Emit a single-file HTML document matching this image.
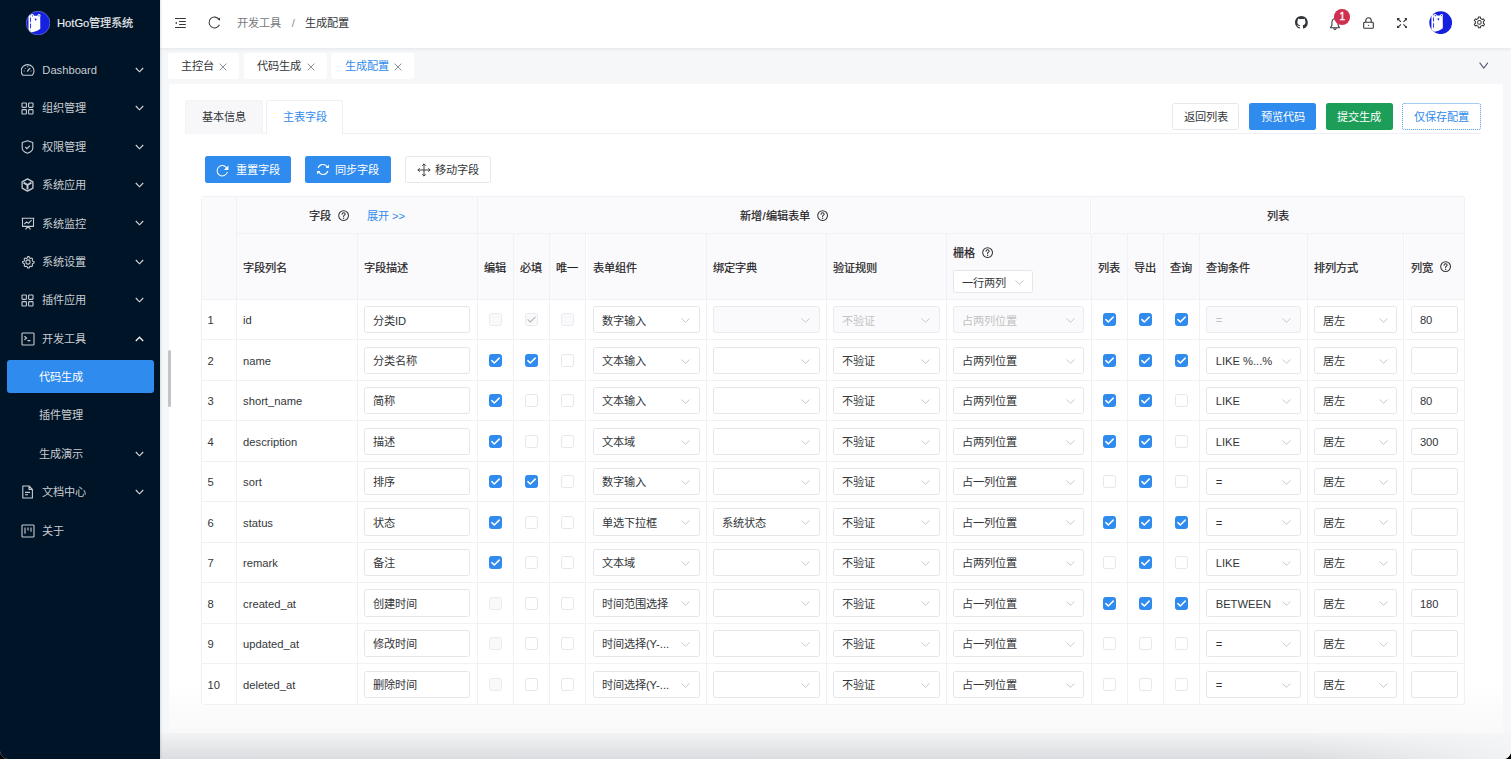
<!DOCTYPE html>
<html lang="zh-CN">
<head>
<meta charset="utf-8">
<title>HotGo</title>
<style>
*{box-sizing:border-box;margin:0;padding:0}
html,body{width:1511px;height:759px;overflow:hidden;background:#000;font-family:"Liberation Sans",sans-serif;font-size:11.2px;color:#333639;-webkit-font-smoothing:antialiased}
.abs{position:absolute}
#win{position:absolute;left:0;top:0;width:1511px;height:759px;background:#f5f7f9;border-radius:0 0 8px 8px;overflow:hidden}
#side{position:absolute;left:0;top:0;width:160px;height:759px;background:#001428;overflow:hidden;box-shadow:1px 0 2px rgba(0,21,41,.12);z-index:2}
#logo{position:absolute;left:26.2px;top:10.5px;width:24.2px;height:24.2px;line-height:0}
#logotxt{position:absolute;left:57px;top:15px;color:#eceef0;font-size:11.2px;line-height:16px;white-space:nowrap;-webkit-text-stroke:0.15px #eceef0}
.mi{position:absolute;left:0;width:160px;height:38.4px}
.mic{position:absolute;left:20.5px;top:13.1px;width:14px;height:14px;display:flex;align-items:center;justify-content:center}
.mt{position:absolute;left:42.3px;top:12px;line-height:16px;color:#c9ccd0;white-space:nowrap}
.mt2{position:absolute;left:39px;top:12px;line-height:16px;color:#c9ccd0;white-space:nowrap}
.mch{position:absolute;left:135.4px;top:16.9px;width:9px;height:6px;line-height:0}
.active{position:absolute;left:7px;width:146.8px;height:33.1px;background:#2f8bed;border-radius:3px}
.active .mt2{left:32px;top:8.9px;color:#fff}
#hdr{position:absolute;left:160px;top:0;width:1351px;height:48px;background:#fff;box-shadow:0 1px 4px rgba(0,21,41,.08);z-index:1}
#tabsbar{position:absolute;left:160px;top:48px;width:1351px;height:36px;background:#f5f7f9}
.ptab{position:absolute;top:53.2px;height:25.6px;background:#fff;border-radius:3px;line-height:27px;padding-left:13.4px;white-space:nowrap;color:#333639}
.ptab .x{position:absolute;top:9.4px;width:8px;height:8px}
#card{position:absolute;left:169px;top:84.4px;width:1334px;height:648.6px;background:linear-gradient(to bottom,#fff 92%,#f9f9fa 100%);border-radius:2px}
.btn{position:absolute;height:27px;border-radius:2.5px;line-height:29px;text-align:center;white-space:nowrap}
.btn.pri{background:#2f8bed;color:#fff}
.btn.suc{background:#1c9e58;color:#fff}
.btn.def{background:#fff;border:1px solid #e8e8ec;color:#333639;line-height:27px}
.btn.dash{background:#fff;border:1px dotted #4f9cf0;color:#2f8bed;line-height:27px}
#tbl{position:absolute;left:201px;top:196.2px;width:1263.5px;height:508.6px;border:1px solid #f0f0f5;border-radius:3px;overflow:hidden}
.c{position:absolute;border-right:1px solid #f1f1f5;border-bottom:1px solid #f1f1f5;display:flex;align-items:center;padding-left:6.1px;white-space:nowrap}
.c.h{background:#fafafc}
.c.b{background:#fff}
.c.nb{border-right:none}
.c.last{border-bottom:none}
.c.ctr{justify-content:center;padding-left:0}
.ht{color:#1f2225;-webkit-text-stroke:0.2px #1f2225}
.q{margin-left:7.1px;flex:none;position:relative;top:0.4px}
.link{color:#2f8bed;margin-left:18px}
.bt{color:#333639}
.cb{display:inline-block;width:13px;height:13px;border:1px solid #e6e6eb;border-radius:2.5px;background:#fff;line-height:0;position:relative}
.cb svg{position:absolute;left:-1px;top:-1px}
.cb.on{background:#2f8bed;border-color:#2f8bed}
.cb.dis{background:#f9f9fb;border-color:#ebebef}
.sel,.inp{position:relative;height:27.2px;border:1px solid #e6e6ea;border-radius:2.5px;background:#fff;display:flex;align-items:center;padding-left:8.3px;overflow:hidden}
.st{position:relative;top:-0.2px}
.st.lt{top:0.6px}
.lt2{position:relative;top:0.5px}
.sel.dis{background:#fafafc;border-color:#ebebef}
.sel.dis .st{color:#c2c2c2}
.sel .chev{position:absolute;right:8.7px;top:11px}
.gridh{display:flex;flex-direction:column;padding-left:0;margin-top:4.6px}
.gridh>div:first-child{display:flex;align-items:center;height:14px;margin-bottom:11.6px}
.gsel{width:80.2px;height:22.3px;flex:none}
.gsel .st{top:0.5px}
.gsel .chev{top:8.6px;right:8.5px}
#botshade{position:absolute;left:160px;top:733px;width:1351px;height:26px;background:linear-gradient(to bottom,#f2f3f5,#dcdde0)}
#botfade{position:absolute;left:1300px;top:733px;width:211px;height:26px;background:linear-gradient(to right,rgba(245,246,248,0),rgba(245,246,248,.85))}
.corner{position:absolute;width:12px;height:12px;background:#000}
</style>
</head>
<body><div id="win">
<div id="side">
  <div id="logo"><svg width="24.2" height="24.2" viewBox="0 0 24 24"><defs><clipPath id="cc1"><circle cx="12" cy="12" r="11.7"/></clipPath></defs><circle cx="12" cy="12" r="11.7" fill="#1620e0"/><g clip-path="url(#cc1)"><rect x="2.5" y="3.2" width="1.7" height="19" fill="#fff"/><path d="M4.2 5.8 C3.9 3.9 5.4 2.9 6.6 3.1 C7.5 3.3 7.9 4.1 8 4.6 L11.3 4.6 C11.5 4 12 3.1 13 3.1 C14.3 3.2 14.9 4.6 14.1 5.9 L14.2 17.6 C12 19.6 8 20.9 4.2 21.4 Z" fill="#fff"/><rect x="4.1" y="6.6" width="0.9" height="4" fill="#1620e0"/><rect x="4.1" y="12.6" width="0.9" height="4.4" fill="#1620e0"/><circle cx="6.5" cy="4.8" r=".65" fill="#1620e0"/><circle cx="12.9" cy="4.8" r=".65" fill="#1620e0"/><ellipse cx="9.6" cy="8.5" rx=".85" ry="1.05" fill="#1620e0"/><circle cx="8.1" cy="7.2" r=".4" fill="#8b90e8"/><circle cx="11.1" cy="7.2" r=".4" fill="#8b90e8"/></g><circle cx="12" cy="12" r="11.75" fill="none" stroke="#9aa0f0" stroke-width=".5"/></svg></div>
  <div id="logotxt">HotGo管理系统</div>
  <div class="mi" style="top:49.8px"><span class="mic"><svg width="14" height="14" viewBox="0 0 14 14"><path d="M1.77 12.2 A6.4 6.4 0 1 1 11.43 12.2 Z" stroke="#c9ccd1" fill="none" stroke-width="1.1" stroke-linejoin="round"/><path d="M6.5 8.1 L8.3 5.8" stroke="#c9ccd1" stroke-width="1.3" stroke-linecap="round"/><path d="M6.6 3.3 v.9 M2.7 8 h.9 M10.5 8 h-.9 M3.9 5.1 l.6 .6 M9.3 5.1 l-.6 .6" stroke="#c9ccd1" fill="none" stroke-width="1.1"/></svg></span><span class="mt">Dashboard</span><span class="mch"><svg width="9" height="6" viewBox="0 0 9 6"><path d="M0.8 1 L4.5 4.8 L8.2 1" fill="none" stroke="#d9dadd" stroke-width="1.1"/></svg></span></div><div class="mi" style="top:88.3px"><span class="mic"><svg width="13" height="13" viewBox="0 0 13 13"><rect x="1" y="1" width="4.4" height="4.4" rx=".6" stroke="#c9ccd1" fill="none" stroke-width="1.1"/><rect x="7.6" y="1" width="4.4" height="4.4" rx=".6" stroke="#c9ccd1" fill="none" stroke-width="1.1"/><rect x="1" y="7.6" width="4.4" height="4.4" rx=".6" stroke="#c9ccd1" fill="none" stroke-width="1.1"/><rect x="7.6" y="7.6" width="4.4" height="4.4" rx=".6" stroke="#c9ccd1" fill="none" stroke-width="1.1"/></svg></span><span class="mt">组织管理</span><span class="mch"><svg width="9" height="6" viewBox="0 0 9 6"><path d="M0.8 1 L4.5 4.8 L8.2 1" fill="none" stroke="#d9dadd" stroke-width="1.1"/></svg></span></div><div class="mi" style="top:126.8px"><span class="mic"><svg width="13" height="14" viewBox="0 0 13 14"><path d="M6.5 0.8 L11.8 2.6 V8 C11.8 10.4 9.4 12.2 6.5 13.2 C3.6 12.2 1.2 10.4 1.2 8 V2.6 Z" stroke="#c9ccd1" fill="none" stroke-width="1.1" stroke-linejoin="round"/><path d="M4.3 7 L6 8.7 L8.9 5.6" stroke="#c9ccd1" fill="none" stroke-width="1.1"/></svg></span><span class="mt">权限管理</span><span class="mch"><svg width="9" height="6" viewBox="0 0 9 6"><path d="M0.8 1 L4.5 4.8 L8.2 1" fill="none" stroke="#d9dadd" stroke-width="1.1"/></svg></span></div><div class="mi" style="top:165.20000000000002px"><span class="mic"><svg width="13" height="14" viewBox="0 0 13 14"><path d="M6.5 0.9 L11.9 3.9 V10.1 L6.5 13.1 L1.1 10.1 V3.9 Z" stroke="#c9ccd1" fill="none" stroke-width="1.3" stroke-linejoin="round"/><path d="M2.6 4.6 L6.5 7 L10.4 4.6 M6.5 7 V11.6" stroke="#c9ccd1" fill="none" stroke-width="1.9"/></svg></span><span class="mt">系统应用</span><span class="mch"><svg width="9" height="6" viewBox="0 0 9 6"><path d="M0.8 1 L4.5 4.8 L8.2 1" fill="none" stroke="#d9dadd" stroke-width="1.1"/></svg></span></div><div class="mi" style="top:203.60000000000002px"><span class="mic"><svg width="14" height="13" viewBox="0 0 14 13"><path d="M0.8 1.2 H13.2 M1.5 1.2 V9.4 H12.5 V1.2 M4.5 12.4 L7 9.4 L9.5 12.4 M3.3 7.2 L5.6 4.8 L7.4 6.3 L10.6 3.2" stroke="#c9ccd1" fill="none" stroke-width="1.1" stroke-linejoin="round"/></svg></span><span class="mt">系统监控</span><span class="mch"><svg width="9" height="6" viewBox="0 0 9 6"><path d="M0.8 1 L4.5 4.8 L8.2 1" fill="none" stroke="#d9dadd" stroke-width="1.1"/></svg></span></div><div class="mi" style="top:242.0px"><span class="mic"><svg width="14" height="14" viewBox="0 0 24 24"><path d="M12 2.5 l2 .3 .6 2.3 1.6 .9 2.3-.7 1.4 1.5 -.7 2.3 .9 1.6 2.3 .6 v2.6 l-2.3 .6 -.9 1.6 .7 2.3 -1.4 1.5 -2.3-.7 -1.6 .9 -.6 2.3 h-2.6 l-.6-2.3 -1.6-.9 -2.3 .7 -1.5-1.5 .7-2.3 -.9-1.6 -2.3-.6 v-2.6 l2.3-.6 .9-1.6 -.7-2.3 1.5-1.5 2.3 .7 1.6-.9 .6-2.3 z" fill="none" stroke="#c9ccd1" stroke-width="1.8" stroke-linejoin="round"/><circle cx="12" cy="12" r="3.6" fill="none" stroke="#c9ccd1" stroke-width="1.8"/></svg></span><span class="mt">系统设置</span><span class="mch"><svg width="9" height="6" viewBox="0 0 9 6"><path d="M0.8 1 L4.5 4.8 L8.2 1" fill="none" stroke="#d9dadd" stroke-width="1.1"/></svg></span></div><div class="mi" style="top:280.40000000000003px"><span class="mic"><svg width="13" height="13" viewBox="0 0 13 13"><rect x="1" y="1" width="4.4" height="4.4" rx=".6" stroke="#c9ccd1" fill="none" stroke-width="1.1"/><rect x="7.6" y="1" width="4.4" height="4.4" rx=".6" stroke="#c9ccd1" fill="none" stroke-width="1.1"/><rect x="1" y="7.6" width="4.4" height="4.4" rx=".6" stroke="#c9ccd1" fill="none" stroke-width="1.1"/><rect x="7.6" y="7.6" width="4.4" height="4.4" rx=".6" stroke="#c9ccd1" fill="none" stroke-width="1.1"/></svg></span><span class="mt">插件应用</span><span class="mch"><svg width="9" height="6" viewBox="0 0 9 6"><path d="M0.8 1 L4.5 4.8 L8.2 1" fill="none" stroke="#d9dadd" stroke-width="1.1"/></svg></span></div><div class="mi" style="top:318.8px"><span class="mic"><svg width="14" height="14" viewBox="0 0 14 14"><rect x="1" y="1" width="12" height="12" rx="0.8" stroke="#c9ccd1" fill="none" stroke-width="1.1"/><path d="M3.4 4.2 L5.6 6 L3.4 7.8 M6.4 8.6 H9.4" stroke="#c9ccd1" fill="none" stroke-width="1.1"/></svg></span><span class="mt">开发工具</span><span class="mch"><svg width="9" height="6" viewBox="0 0 9 6"><path d="M0.8 5 L4.5 1.2 L8.2 5" fill="none" stroke="#eef0f2" stroke-width="1.3"/></svg></span></div><div class="active" style="top:360.2px"><span class="mt2">代码生成</span></div><div class="mi" style="top:395.3px"><span class="mt2 sub">插件管理</span></div><div class="mi" style="top:433.7px"><span class="mt2 sub">生成演示</span><span class="mch"><svg width="9" height="6" viewBox="0 0 9 6"><path d="M0.8 1 L4.5 4.8 L8.2 1" fill="none" stroke="#d9dadd" stroke-width="1.1"/></svg></span></div><div class="mi" style="top:472.1px"><span class="mic"><svg width="13" height="14" viewBox="0 0 13 14"><path d="M1.8 1 H8 L11.4 4.4 V13 H1.8 Z M8 1 V4.4 H11.4 M4 7.4 H9 M4 9.8 H7" stroke="#c9ccd1" fill="none" stroke-width="1.1" stroke-linejoin="round"/></svg></span><span class="mt">文档中心</span><span class="mch"><svg width="9" height="6" viewBox="0 0 9 6"><path d="M0.8 1 L4.5 4.8 L8.2 1" fill="none" stroke="#d9dadd" stroke-width="1.1"/></svg></span></div><div class="mi" style="top:510.50000000000006px"><span class="mic"><svg width="14" height="14" viewBox="0 0 14 14"><rect x="1" y="1" width="12" height="12" rx="0.8" stroke="#c9ccd1" fill="none" stroke-width="1.1"/><path d="M4 3.6 V9.8 M7 3.6 V6.6 M10 3.6 V7.8" stroke="#c9ccd1" fill="none" stroke-width="1.1"/></svg></span><span class="mt">关于</span></div>
</div>
<div id="hdr">
  <svg class="abs" style="left:15px;top:18px" width="11" height="10" viewBox="0 0 11 10"><path d="M0 0.5 H10.8 M4.1 3.5 H10.8 M4.1 6.4 H10.8 M0 9.4 H10.8" stroke="#333639" stroke-width="1.05"/><path d="M0 4.95 L1.9 3.7 V6.2 Z" fill="#333639"/></svg>
  <svg class="abs" style="left:47.6px;top:16.4px" width="13" height="13" viewBox="0 0 13 13"><path d="M11.39 8.78 A5.4 5.4 0 1 1 10.92 3.40" fill="none" stroke="#333639" stroke-width="1.05"/><path d="M9.5 3.1 L12.1 1.8 L12 4.7 Z" fill="#333639"/></svg>
  <span class="abs" style="left:77.3px;top:15px;line-height:16px;color:#76797d">开发工具</span>
  <span class="abs" style="left:131.8px;top:15px;line-height:16px;color:#8a8d91">/</span>
  <span class="abs" style="left:144.8px;top:15px;line-height:16px;color:#333639">生成配置</span>
  <!-- right icons -->
  <svg class="abs" style="left:1135.2px;top:16.4px" width="12.8" height="12.8" viewBox="0 0 16 16"><path fill="#333639" d="M8 0C3.58 0 0 3.58 0 8c0 3.54 2.29 6.53 5.47 7.59.4.07.55-.17.55-.38 0-.19-.01-.82-.01-1.49-2.01.37-2.53-.49-2.69-.94-.09-.23-.48-.94-.82-1.13-.28-.15-.68-.52-.01-.53.63-.01 1.08.58 1.23.82.72 1.21 1.87.87 2.33.66.07-.52.28-.87.51-1.07-1.78-.2-3.64-.89-3.64-3.95 0-.87.31-1.59.82-2.15-.08-.2-.36-1.02.08-2.12 0 0 .67-.21 2.2.82.64-.18 1.32-.27 2-.27.68 0 1.36.09 2 .27 1.53-1.04 2.2-.82 2.2-.82.44 1.1.16 1.92.08 2.12.51.56.82 1.27.82 2.15 0 3.07-1.87 3.75-3.65 3.95.29.25.54.73.54 1.48 0 1.07-.01 1.93-.01 2.2 0 .21.15.46.55.38A8.013 8.013 0 0016 8c0-4.42-3.58-8-8-8z"/></svg>
  <svg class="abs" style="left:1169.6px;top:17.6px" width="10" height="12" viewBox="0 0 10 12"><path d="M5 0.8 C3 0.8 1.9 2.4 1.9 4.3 V7.4 L0.7 9.2 V9.8 H9.3 V9.2 L8.1 7.4 V4.3 C8.1 2.4 7 0.8 5 0.8 Z M3.7 10.4 C3.9 11.1 4.4 11.5 5 11.5 C5.6 11.5 6.1 11.1 6.3 10.4" fill="none" stroke="#333639" stroke-width="1.05" stroke-linejoin="round"/></svg>
  <div class="abs" style="left:1174.4px;top:9.3px;width:15.6px;height:15.6px;border-radius:50%;background:#d03050;color:#fff;font-size:10px;line-height:15.6px;text-align:center;-webkit-text-stroke:0.35px #fff">1</div>
  <svg class="abs" style="left:1203px;top:16.9px" width="11" height="12" viewBox="0 0 11 12"><rect x="0.7" y="5.3" width="9.6" height="6" rx="0.9" fill="none" stroke="#333639" stroke-width="1.1"/><path d="M2.8 5.3 V3.5 C2.8 2 4 0.7 5.5 0.7 C7 0.7 8.2 2 8.2 3.5 V5.3" fill="none" stroke="#333639" stroke-width="1.1"/><circle cx="5.5" cy="8.3" r=".65" fill="#333639"/></svg>
  <svg class="abs" style="left:1236.8px;top:17.8px" width="10.4" height="10.4" viewBox="0 0 10 10"><path d="M1.2 1.2 L3.8 3.8 M8.8 1.2 L6.2 3.8 M1.2 8.8 L3.8 6.2 M8.8 8.8 L6.2 6.2" stroke="#333639" stroke-width="1.1"/><path d="M0 0 H3 L0 3 Z M10 0 V3 L7 0 Z M0 10 V7 L3 10 Z M10 10 H7 L10 7 Z" fill="#333639"/></svg>
  <div class="abs" style="left:1269px;top:10.6px;width:23.4px;height:23.4px;line-height:0"><svg width="23.4" height="23.4" viewBox="0 0 24 24"><defs><clipPath id="cc2"><circle cx="12" cy="12" r="11.7"/></clipPath></defs><circle cx="12" cy="12" r="11.7" fill="#1620e0"/><g clip-path="url(#cc2)"><rect x="2.5" y="3.2" width="1.7" height="19" fill="#fff"/><path d="M4.2 5.8 C3.9 3.9 5.4 2.9 6.6 3.1 C7.5 3.3 7.9 4.1 8 4.6 L11.3 4.6 C11.5 4 12 3.1 13 3.1 C14.3 3.2 14.9 4.6 14.1 5.9 L14.2 17.6 C12 19.6 8 20.9 4.2 21.4 Z" fill="#fff"/><rect x="4.1" y="6.6" width="0.9" height="4" fill="#1620e0"/><rect x="4.1" y="12.6" width="0.9" height="4.4" fill="#1620e0"/><circle cx="6.5" cy="4.8" r=".65" fill="#1620e0"/><circle cx="12.9" cy="4.8" r=".65" fill="#1620e0"/><ellipse cx="9.6" cy="8.5" rx=".85" ry="1.05" fill="#1620e0"/><circle cx="8.1" cy="7.2" r=".4" fill="#8b90e8"/><circle cx="11.1" cy="7.2" r=".4" fill="#8b90e8"/></g></svg></div>
  <svg class="abs" style="left:1312.6px;top:16.2px" width="12.8" height="12.8" viewBox="0 0 24 24"><path d="M8.20 5.42 L9.91 4.69 L10.05 1.99 L13.95 1.99 L14.09 4.69 L15.80 5.42 L17.28 6.53 L19.70 5.31 L21.64 8.68 L19.37 10.16 L19.60 12.00 L19.37 13.84 L21.64 15.32 L19.70 18.69 L17.28 17.47 L15.80 18.58 L14.09 19.31 L13.95 22.01 L10.05 22.01 L9.91 19.31 L8.20 18.58 L6.72 17.47 L4.30 18.69 L2.36 15.32 L4.63 13.84 L4.40 12.00 L4.63 10.16 L2.36 8.68 L4.30 5.31 L6.72 6.53 Z" fill="none" stroke="#333639" stroke-width="1.9" stroke-linejoin="round"/><circle cx="12" cy="12" r="3.4" fill="none" stroke="#333639" stroke-width="1.9"/></svg>
</div>
<div id="tabsbar">
  <svg class="abs" style="left:1318.6px;top:14.4px" width="9.6" height="7" viewBox="0 0 9.6 7"><path d="M0.6 0.7 L4.8 6.1 L9 0.7" fill="none" stroke="#515a6e" stroke-width="1.1"/></svg>
</div>
<div class="ptab" style="left:168px;width:71px">主控台<svg class="x" style="left:51px" viewBox="0 0 8 8"><path d="M0.6 0.6 L7.4 7.4 M7.4 0.6 L0.6 7.4" stroke="#8c8f93" stroke-width="1"/></svg></div>
<div class="ptab" style="left:244px;width:82.6px">代码生成<svg class="x" style="left:63px" viewBox="0 0 8 8"><path d="M0.6 0.6 L7.4 7.4 M7.4 0.6 L0.6 7.4" stroke="#8c8f93" stroke-width="1"/></svg></div>
<div class="ptab" style="left:331.4px;width:82.2px;color:#2f8bed">生成配置<svg class="x" style="left:63px" viewBox="0 0 8 8"><path d="M0.6 0.6 L7.4 7.4 M7.4 0.6 L0.6 7.4" stroke="#8c8f93" stroke-width="1"/></svg></div>
<div id="card"></div>
<div id="botshade"></div><div id="botfade"></div>
<!-- scrollbar -->
<div class="abs" style="left:168.2px;top:349.8px;width:3px;height:57px;border-radius:2px;background:#c4c4c6"></div>
<!-- inner tabs -->
<div class="abs" style="left:185px;top:133.4px;width:1296px;height:1px;background:#efeff5"></div>
<div class="abs" style="left:185px;top:100.2px;width:77.6px;height:33.4px;background:#f7f7fa;border:1px solid #f3f3f6;border-bottom:none;border-radius:3px 3px 0 0;color:#333639;line-height:33px;padding-left:16px;white-space:nowrap">基本信息</div>
<div class="abs" style="left:265.6px;top:100.2px;width:77.7px;height:34px;background:#fff;border:1px solid #f0f0f4;border-bottom:none;border-radius:3px 3px 0 0;color:#2f8bed;line-height:33px;padding-left:16.5px;white-space:nowrap">主表字段</div>
<div class="btn def" style="left:1172.3px;top:103.1px;width:67.2px">返回列表</div>
<div class="btn pri" style="left:1249.1px;top:103.1px;width:67px">预览代码</div>
<div class="btn suc" style="left:1326px;top:103.1px;width:66.7px">提交生成</div>
<div class="btn dash" style="left:1402px;top:103.1px;width:79px">仅保存配置</div>
<!-- toolbar -->
<div class="btn pri" style="left:205px;top:156px;width:86px;padding-left:30.5px;text-align:left">
  <svg class="abs" style="left:11px;top:7.5px" width="13" height="13" viewBox="0 0 13 13"><path d="M11.3 5.2 A5.2 5.2 0 1 0 11.4 8" fill="none" stroke="#fff" stroke-width="1.05"/><path d="M12.4 1.4 V5.9 H7.9 Z" fill="#fff"/></svg>重置字段</div>
<div class="btn pri" style="left:304.9px;top:156px;width:86.1px;padding-left:30.6px;text-align:left">
  <svg class="abs" style="left:10.8px;top:7.3px" width="14" height="13" viewBox="0 0 14 13"><path d="M2.1 5 A5 5 0 0 1 11.3 4.3 M11.9 8 A5 5 0 0 1 2.7 8.7" fill="none" stroke="#fff" stroke-width="1.05"/><path d="M9.6 4.9 H12.9 V1.6 Z M4.4 8.1 H1.1 V11.4 Z" fill="#fff"/></svg>同步字段</div>
<div class="btn def" style="left:405px;top:156px;width:85.6px;padding-left:29px;text-align:left">
  <svg class="abs" style="left:10.6px;top:6.2px" width="14" height="14" viewBox="0 0 14 14"><path d="M7 0.9 V13.1 M0.9 7 H13.1 M5.2 2.7 L7 0.9 L8.8 2.7 M5.2 11.3 L7 13.1 L8.8 11.3 M2.7 5.2 L0.9 7 L2.7 8.8 M11.3 5.2 L13.1 7 L11.3 8.8" fill="none" stroke="#333639" stroke-width="0.95"/></svg>移动字段</div>
<div id="tbl"><div class="c h" style="left:-0.5px;top:-0.5px;width:35.5px;height:103.3px;"></div><div class="c h ctr g1" style="left:35.0px;top:-0.5px;width:240.8px;height:37.4px;"><span class="ht">字段</span><svg class="q" width="11.2" height="11.2" viewBox="0 0 16 16"><circle cx="8" cy="8" r="7" fill="none" stroke="#333639" stroke-width="1.5"/><path d="M5.8 6.1 C5.8 4.8 6.8 4 8 4 C9.2 4 10.2 4.8 10.2 5.9 C10.2 7.4 8 7.5 8 9.3" fill="none" stroke="#333639" stroke-width="1.5" stroke-linecap="round"/><circle cx="8" cy="11.8" r="1" fill="#333639"/></svg><span class="link">展开 &gt;&gt;</span></div><div class="c h ctr g2" style="left:275.8px;top:-0.5px;width:613.7px;height:37.4px;"><span class="ht">新增/编辑表单</span><svg class="q" width="11.2" height="11.2" viewBox="0 0 16 16"><circle cx="8" cy="8" r="7" fill="none" stroke="#333639" stroke-width="1.5"/><path d="M5.8 6.1 C5.8 4.8 6.8 4 8 4 C9.2 4 10.2 4.8 10.2 5.9 C10.2 7.4 8 7.5 8 9.3" fill="none" stroke="#333639" stroke-width="1.5" stroke-linecap="round"/><circle cx="8" cy="11.8" r="1" fill="#333639"/></svg></div><div class="c h ctr g3" style="left:889.5px;top:-0.5px;width:373.5px;height:37.4px;"><span class="ht">列表</span></div><div class="c h h2" style="left:35.0px;top:36.9px;width:120.5px;height:65.9px;"><span class="ht">字段列名</span></div><div class="c h h2" style="left:155.5px;top:36.9px;width:120.3px;height:65.9px;"><span class="ht">字段描述</span></div><div class="c h h2" style="left:275.8px;top:36.9px;width:36.2px;height:65.9px;"><span class="ht">编辑</span></div><div class="c h h2" style="left:312.0px;top:36.9px;width:35.9px;height:65.9px;"><span class="ht">必填</span></div><div class="c h h2" style="left:347.9px;top:36.9px;width:36.6px;height:65.9px;"><span class="ht">唯一</span></div><div class="c h h2" style="left:384.5px;top:36.9px;width:120.3px;height:65.9px;"><span class="ht">表单组件</span></div><div class="c h h2" style="left:504.8px;top:36.9px;width:120.1px;height:65.9px;"><span class="ht">绑定字典</span></div><div class="c h h2" style="left:624.9px;top:36.9px;width:120.1px;height:65.9px;"><span class="ht">验证规则</span></div><div class="c h h2" style="left:745.0px;top:36.9px;width:144.5px;height:65.9px;"><div class="gridh"><div><span class="ht">栅格</span><svg class="q" width="11.2" height="11.2" viewBox="0 0 16 16"><circle cx="8" cy="8" r="7" fill="none" stroke="#333639" stroke-width="1.5"/><path d="M5.8 6.1 C5.8 4.8 6.8 4 8 4 C9.2 4 10.2 4.8 10.2 5.9 C10.2 7.4 8 7.5 8 9.3" fill="none" stroke="#333639" stroke-width="1.5" stroke-linecap="round"/><circle cx="8" cy="11.8" r="1" fill="#333639"/></svg></div><div class="sel gsel"><span class="st">一行两列</span><svg class="chev" width="9" height="5" viewBox="0 0 9 5"><path d="M0.5 0.5 L4.5 4.3 L8.5 0.5" fill="none" stroke="#c2c2c2" stroke-width="0.9"/></svg></div></div></div><div class="c h h2" style="left:889.5px;top:36.9px;width:36.3px;height:65.9px;"><span class="ht">列表</span></div><div class="c h h2" style="left:925.8px;top:36.9px;width:36.0px;height:65.9px;"><span class="ht">导出</span></div><div class="c h h2" style="left:961.8px;top:36.9px;width:36.5px;height:65.9px;"><span class="ht">查询</span></div><div class="c h h2" style="left:998.3px;top:36.9px;width:107.8px;height:65.9px;"><span class="ht">查询条件</span></div><div class="c h h2" style="left:1106.1px;top:36.9px;width:96.4px;height:65.9px;"><span class="ht">排列方式</span></div><div class="c h h2 nb" style="left:1202.5px;top:36.9px;width:60.5px;height:65.9px;"><span class="ht">列宽</span><svg class="q" width="11.2" height="11.2" viewBox="0 0 16 16"><circle cx="8" cy="8" r="7" fill="none" stroke="#333639" stroke-width="1.5"/><path d="M5.8 6.1 C5.8 4.8 6.8 4 8 4 C9.2 4 10.2 4.8 10.2 5.9 C10.2 7.4 8 7.5 8 9.3" fill="none" stroke="#333639" stroke-width="1.5" stroke-linecap="round"/><circle cx="8" cy="11.8" r="1" fill="#333639"/></svg></div><div class="c b" style="left:-0.5px;top:102.8px;width:35.5px;height:40.47px;"><span class="bt lt2">1</span></div><div class="c b" style="left:35.0px;top:102.8px;width:120.5px;height:40.47px;"><span class="bt lt2">id</span></div><div class="c b" style="left:155.5px;top:102.8px;width:120.3px;height:40.47px;"><div class="inp" style="width:106.9px"><span class="st">分类ID</span></div></div><div class="c b ctr" style="left:275.8px;top:102.8px;width:36.2px;height:40.47px;"><span class="cb dis"></span></div><div class="c b ctr" style="left:312.0px;top:102.8px;width:35.9px;height:40.47px;"><span class="cb dis"><svg width="13" height="13" viewBox="0 0 13 13"><path d="M2.9 6.6 L5.3 9 L10.2 4.1" fill="none" stroke="#b8b8bc" stroke-width="1.1" stroke-linecap="round" stroke-linejoin="round"/></svg></span></div><div class="c b ctr" style="left:347.9px;top:102.8px;width:36.6px;height:40.47px;"><span class="cb dis"></span></div><div class="c b" style="left:384.5px;top:102.8px;width:120.3px;height:40.47px;"><div class="sel" style="width:107.1px"><span class="st">数字输入</span><svg class="chev" width="9" height="5" viewBox="0 0 9 5"><path d="M0.5 0.5 L4.5 4.3 L8.5 0.5" fill="none" stroke="#c2c2c2" stroke-width="0.9"/></svg></div></div><div class="c b" style="left:504.8px;top:102.8px;width:120.1px;height:40.47px;"><div class="sel dis" style="width:106.9px"><span class="st"></span><svg class="chev" width="9" height="5" viewBox="0 0 9 5"><path d="M0.5 0.5 L4.5 4.3 L8.5 0.5" fill="none" stroke="#c2c2c2" stroke-width="0.9"/></svg></div></div><div class="c b" style="left:624.9px;top:102.8px;width:120.1px;height:40.47px;"><div class="sel dis" style="width:106.9px"><span class="st">不验证</span><svg class="chev" width="9" height="5" viewBox="0 0 9 5"><path d="M0.5 0.5 L4.5 4.3 L8.5 0.5" fill="none" stroke="#c2c2c2" stroke-width="0.9"/></svg></div></div><div class="c b" style="left:745.0px;top:102.8px;width:144.5px;height:40.47px;"><div class="sel dis" style="width:131.3px"><span class="st">占两列位置</span><svg class="chev" width="9" height="5" viewBox="0 0 9 5"><path d="M0.5 0.5 L4.5 4.3 L8.5 0.5" fill="none" stroke="#c2c2c2" stroke-width="0.9"/></svg></div></div><div class="c b ctr" style="left:889.5px;top:102.8px;width:36.3px;height:40.47px;"><span class="cb on"><svg width="13" height="13" viewBox="0 0 13 13"><path d="M2.9 6.6 L5.3 9 L10.2 4.1" fill="none" stroke="#fff" stroke-width="1.5" stroke-linecap="round" stroke-linejoin="round"/></svg></span></div><div class="c b ctr" style="left:925.8px;top:102.8px;width:36.0px;height:40.47px;"><span class="cb on"><svg width="13" height="13" viewBox="0 0 13 13"><path d="M2.9 6.6 L5.3 9 L10.2 4.1" fill="none" stroke="#fff" stroke-width="1.5" stroke-linecap="round" stroke-linejoin="round"/></svg></span></div><div class="c b ctr" style="left:961.8px;top:102.8px;width:36.5px;height:40.47px;"><span class="cb on"><svg width="13" height="13" viewBox="0 0 13 13"><path d="M2.9 6.6 L5.3 9 L10.2 4.1" fill="none" stroke="#fff" stroke-width="1.5" stroke-linecap="round" stroke-linejoin="round"/></svg></span></div><div class="c b" style="left:998.3px;top:102.8px;width:107.8px;height:40.47px;"><div class="sel dis" style="width:94.6px"><span class="st lt">=</span><svg class="chev" width="9" height="5" viewBox="0 0 9 5"><path d="M0.5 0.5 L4.5 4.3 L8.5 0.5" fill="none" stroke="#c2c2c2" stroke-width="0.9"/></svg></div></div><div class="c b" style="left:1106.1px;top:102.8px;width:96.4px;height:40.47px;"><div class="sel" style="width:83.2px"><span class="st">居左</span><svg class="chev" width="9" height="5" viewBox="0 0 9 5"><path d="M0.5 0.5 L4.5 4.3 L8.5 0.5" fill="none" stroke="#c2c2c2" stroke-width="0.9"/></svg></div></div><div class="c b nb" style="left:1202.5px;top:102.8px;width:60.5px;height:40.47px;"><div class="inp" style="width:47.3px"><span class="st lt">80</span></div></div><div class="c b" style="left:-0.5px;top:143.27px;width:35.5px;height:40.47px;"><span class="bt lt2">2</span></div><div class="c b" style="left:35.0px;top:143.27px;width:120.5px;height:40.47px;"><span class="bt lt2">name</span></div><div class="c b" style="left:155.5px;top:143.27px;width:120.3px;height:40.47px;"><div class="inp" style="width:106.9px"><span class="st">分类名称</span></div></div><div class="c b ctr" style="left:275.8px;top:143.27px;width:36.2px;height:40.47px;"><span class="cb on"><svg width="13" height="13" viewBox="0 0 13 13"><path d="M2.9 6.6 L5.3 9 L10.2 4.1" fill="none" stroke="#fff" stroke-width="1.5" stroke-linecap="round" stroke-linejoin="round"/></svg></span></div><div class="c b ctr" style="left:312.0px;top:143.27px;width:35.9px;height:40.47px;"><span class="cb on"><svg width="13" height="13" viewBox="0 0 13 13"><path d="M2.9 6.6 L5.3 9 L10.2 4.1" fill="none" stroke="#fff" stroke-width="1.5" stroke-linecap="round" stroke-linejoin="round"/></svg></span></div><div class="c b ctr" style="left:347.9px;top:143.27px;width:36.6px;height:40.47px;"><span class="cb"></span></div><div class="c b" style="left:384.5px;top:143.27px;width:120.3px;height:40.47px;"><div class="sel" style="width:107.1px"><span class="st">文本输入</span><svg class="chev" width="9" height="5" viewBox="0 0 9 5"><path d="M0.5 0.5 L4.5 4.3 L8.5 0.5" fill="none" stroke="#c2c2c2" stroke-width="0.9"/></svg></div></div><div class="c b" style="left:504.8px;top:143.27px;width:120.1px;height:40.47px;"><div class="sel" style="width:106.9px"><span class="st"></span><svg class="chev" width="9" height="5" viewBox="0 0 9 5"><path d="M0.5 0.5 L4.5 4.3 L8.5 0.5" fill="none" stroke="#c2c2c2" stroke-width="0.9"/></svg></div></div><div class="c b" style="left:624.9px;top:143.27px;width:120.1px;height:40.47px;"><div class="sel" style="width:106.9px"><span class="st">不验证</span><svg class="chev" width="9" height="5" viewBox="0 0 9 5"><path d="M0.5 0.5 L4.5 4.3 L8.5 0.5" fill="none" stroke="#c2c2c2" stroke-width="0.9"/></svg></div></div><div class="c b" style="left:745.0px;top:143.27px;width:144.5px;height:40.47px;"><div class="sel" style="width:131.3px"><span class="st">占两列位置</span><svg class="chev" width="9" height="5" viewBox="0 0 9 5"><path d="M0.5 0.5 L4.5 4.3 L8.5 0.5" fill="none" stroke="#c2c2c2" stroke-width="0.9"/></svg></div></div><div class="c b ctr" style="left:889.5px;top:143.27px;width:36.3px;height:40.47px;"><span class="cb on"><svg width="13" height="13" viewBox="0 0 13 13"><path d="M2.9 6.6 L5.3 9 L10.2 4.1" fill="none" stroke="#fff" stroke-width="1.5" stroke-linecap="round" stroke-linejoin="round"/></svg></span></div><div class="c b ctr" style="left:925.8px;top:143.27px;width:36.0px;height:40.47px;"><span class="cb on"><svg width="13" height="13" viewBox="0 0 13 13"><path d="M2.9 6.6 L5.3 9 L10.2 4.1" fill="none" stroke="#fff" stroke-width="1.5" stroke-linecap="round" stroke-linejoin="round"/></svg></span></div><div class="c b ctr" style="left:961.8px;top:143.27px;width:36.5px;height:40.47px;"><span class="cb on"><svg width="13" height="13" viewBox="0 0 13 13"><path d="M2.9 6.6 L5.3 9 L10.2 4.1" fill="none" stroke="#fff" stroke-width="1.5" stroke-linecap="round" stroke-linejoin="round"/></svg></span></div><div class="c b" style="left:998.3px;top:143.27px;width:107.8px;height:40.47px;"><div class="sel" style="width:94.6px"><span class="st lt">LIKE %...%</span><svg class="chev" width="9" height="5" viewBox="0 0 9 5"><path d="M0.5 0.5 L4.5 4.3 L8.5 0.5" fill="none" stroke="#c2c2c2" stroke-width="0.9"/></svg></div></div><div class="c b" style="left:1106.1px;top:143.27px;width:96.4px;height:40.47px;"><div class="sel" style="width:83.2px"><span class="st">居左</span><svg class="chev" width="9" height="5" viewBox="0 0 9 5"><path d="M0.5 0.5 L4.5 4.3 L8.5 0.5" fill="none" stroke="#c2c2c2" stroke-width="0.9"/></svg></div></div><div class="c b nb" style="left:1202.5px;top:143.27px;width:60.5px;height:40.47px;"><div class="inp" style="width:47.3px"><span class="st"></span></div></div><div class="c b" style="left:-0.5px;top:183.74px;width:35.5px;height:40.47px;"><span class="bt lt2">3</span></div><div class="c b" style="left:35.0px;top:183.74px;width:120.5px;height:40.47px;"><span class="bt lt2">short_name</span></div><div class="c b" style="left:155.5px;top:183.74px;width:120.3px;height:40.47px;"><div class="inp" style="width:106.9px"><span class="st">简称</span></div></div><div class="c b ctr" style="left:275.8px;top:183.74px;width:36.2px;height:40.47px;"><span class="cb on"><svg width="13" height="13" viewBox="0 0 13 13"><path d="M2.9 6.6 L5.3 9 L10.2 4.1" fill="none" stroke="#fff" stroke-width="1.5" stroke-linecap="round" stroke-linejoin="round"/></svg></span></div><div class="c b ctr" style="left:312.0px;top:183.74px;width:35.9px;height:40.47px;"><span class="cb"></span></div><div class="c b ctr" style="left:347.9px;top:183.74px;width:36.6px;height:40.47px;"><span class="cb"></span></div><div class="c b" style="left:384.5px;top:183.74px;width:120.3px;height:40.47px;"><div class="sel" style="width:107.1px"><span class="st">文本输入</span><svg class="chev" width="9" height="5" viewBox="0 0 9 5"><path d="M0.5 0.5 L4.5 4.3 L8.5 0.5" fill="none" stroke="#c2c2c2" stroke-width="0.9"/></svg></div></div><div class="c b" style="left:504.8px;top:183.74px;width:120.1px;height:40.47px;"><div class="sel" style="width:106.9px"><span class="st"></span><svg class="chev" width="9" height="5" viewBox="0 0 9 5"><path d="M0.5 0.5 L4.5 4.3 L8.5 0.5" fill="none" stroke="#c2c2c2" stroke-width="0.9"/></svg></div></div><div class="c b" style="left:624.9px;top:183.74px;width:120.1px;height:40.47px;"><div class="sel" style="width:106.9px"><span class="st">不验证</span><svg class="chev" width="9" height="5" viewBox="0 0 9 5"><path d="M0.5 0.5 L4.5 4.3 L8.5 0.5" fill="none" stroke="#c2c2c2" stroke-width="0.9"/></svg></div></div><div class="c b" style="left:745.0px;top:183.74px;width:144.5px;height:40.47px;"><div class="sel" style="width:131.3px"><span class="st">占两列位置</span><svg class="chev" width="9" height="5" viewBox="0 0 9 5"><path d="M0.5 0.5 L4.5 4.3 L8.5 0.5" fill="none" stroke="#c2c2c2" stroke-width="0.9"/></svg></div></div><div class="c b ctr" style="left:889.5px;top:183.74px;width:36.3px;height:40.47px;"><span class="cb on"><svg width="13" height="13" viewBox="0 0 13 13"><path d="M2.9 6.6 L5.3 9 L10.2 4.1" fill="none" stroke="#fff" stroke-width="1.5" stroke-linecap="round" stroke-linejoin="round"/></svg></span></div><div class="c b ctr" style="left:925.8px;top:183.74px;width:36.0px;height:40.47px;"><span class="cb on"><svg width="13" height="13" viewBox="0 0 13 13"><path d="M2.9 6.6 L5.3 9 L10.2 4.1" fill="none" stroke="#fff" stroke-width="1.5" stroke-linecap="round" stroke-linejoin="round"/></svg></span></div><div class="c b ctr" style="left:961.8px;top:183.74px;width:36.5px;height:40.47px;"><span class="cb"></span></div><div class="c b" style="left:998.3px;top:183.74px;width:107.8px;height:40.47px;"><div class="sel" style="width:94.6px"><span class="st lt">LIKE</span><svg class="chev" width="9" height="5" viewBox="0 0 9 5"><path d="M0.5 0.5 L4.5 4.3 L8.5 0.5" fill="none" stroke="#c2c2c2" stroke-width="0.9"/></svg></div></div><div class="c b" style="left:1106.1px;top:183.74px;width:96.4px;height:40.47px;"><div class="sel" style="width:83.2px"><span class="st">居左</span><svg class="chev" width="9" height="5" viewBox="0 0 9 5"><path d="M0.5 0.5 L4.5 4.3 L8.5 0.5" fill="none" stroke="#c2c2c2" stroke-width="0.9"/></svg></div></div><div class="c b nb" style="left:1202.5px;top:183.74px;width:60.5px;height:40.47px;"><div class="inp" style="width:47.3px"><span class="st lt">80</span></div></div><div class="c b" style="left:-0.5px;top:224.21px;width:35.5px;height:40.47px;"><span class="bt lt2">4</span></div><div class="c b" style="left:35.0px;top:224.21px;width:120.5px;height:40.47px;"><span class="bt lt2">description</span></div><div class="c b" style="left:155.5px;top:224.21px;width:120.3px;height:40.47px;"><div class="inp" style="width:106.9px"><span class="st">描述</span></div></div><div class="c b ctr" style="left:275.8px;top:224.21px;width:36.2px;height:40.47px;"><span class="cb on"><svg width="13" height="13" viewBox="0 0 13 13"><path d="M2.9 6.6 L5.3 9 L10.2 4.1" fill="none" stroke="#fff" stroke-width="1.5" stroke-linecap="round" stroke-linejoin="round"/></svg></span></div><div class="c b ctr" style="left:312.0px;top:224.21px;width:35.9px;height:40.47px;"><span class="cb"></span></div><div class="c b ctr" style="left:347.9px;top:224.21px;width:36.6px;height:40.47px;"><span class="cb"></span></div><div class="c b" style="left:384.5px;top:224.21px;width:120.3px;height:40.47px;"><div class="sel" style="width:107.1px"><span class="st">文本域</span><svg class="chev" width="9" height="5" viewBox="0 0 9 5"><path d="M0.5 0.5 L4.5 4.3 L8.5 0.5" fill="none" stroke="#c2c2c2" stroke-width="0.9"/></svg></div></div><div class="c b" style="left:504.8px;top:224.21px;width:120.1px;height:40.47px;"><div class="sel" style="width:106.9px"><span class="st"></span><svg class="chev" width="9" height="5" viewBox="0 0 9 5"><path d="M0.5 0.5 L4.5 4.3 L8.5 0.5" fill="none" stroke="#c2c2c2" stroke-width="0.9"/></svg></div></div><div class="c b" style="left:624.9px;top:224.21px;width:120.1px;height:40.47px;"><div class="sel" style="width:106.9px"><span class="st">不验证</span><svg class="chev" width="9" height="5" viewBox="0 0 9 5"><path d="M0.5 0.5 L4.5 4.3 L8.5 0.5" fill="none" stroke="#c2c2c2" stroke-width="0.9"/></svg></div></div><div class="c b" style="left:745.0px;top:224.21px;width:144.5px;height:40.47px;"><div class="sel" style="width:131.3px"><span class="st">占两列位置</span><svg class="chev" width="9" height="5" viewBox="0 0 9 5"><path d="M0.5 0.5 L4.5 4.3 L8.5 0.5" fill="none" stroke="#c2c2c2" stroke-width="0.9"/></svg></div></div><div class="c b ctr" style="left:889.5px;top:224.21px;width:36.3px;height:40.47px;"><span class="cb on"><svg width="13" height="13" viewBox="0 0 13 13"><path d="M2.9 6.6 L5.3 9 L10.2 4.1" fill="none" stroke="#fff" stroke-width="1.5" stroke-linecap="round" stroke-linejoin="round"/></svg></span></div><div class="c b ctr" style="left:925.8px;top:224.21px;width:36.0px;height:40.47px;"><span class="cb on"><svg width="13" height="13" viewBox="0 0 13 13"><path d="M2.9 6.6 L5.3 9 L10.2 4.1" fill="none" stroke="#fff" stroke-width="1.5" stroke-linecap="round" stroke-linejoin="round"/></svg></span></div><div class="c b ctr" style="left:961.8px;top:224.21px;width:36.5px;height:40.47px;"><span class="cb"></span></div><div class="c b" style="left:998.3px;top:224.21px;width:107.8px;height:40.47px;"><div class="sel" style="width:94.6px"><span class="st lt">LIKE</span><svg class="chev" width="9" height="5" viewBox="0 0 9 5"><path d="M0.5 0.5 L4.5 4.3 L8.5 0.5" fill="none" stroke="#c2c2c2" stroke-width="0.9"/></svg></div></div><div class="c b" style="left:1106.1px;top:224.21px;width:96.4px;height:40.47px;"><div class="sel" style="width:83.2px"><span class="st">居左</span><svg class="chev" width="9" height="5" viewBox="0 0 9 5"><path d="M0.5 0.5 L4.5 4.3 L8.5 0.5" fill="none" stroke="#c2c2c2" stroke-width="0.9"/></svg></div></div><div class="c b nb" style="left:1202.5px;top:224.21px;width:60.5px;height:40.47px;"><div class="inp" style="width:47.3px"><span class="st lt">300</span></div></div><div class="c b" style="left:-0.5px;top:264.68px;width:35.5px;height:40.47px;"><span class="bt lt2">5</span></div><div class="c b" style="left:35.0px;top:264.68px;width:120.5px;height:40.47px;"><span class="bt lt2">sort</span></div><div class="c b" style="left:155.5px;top:264.68px;width:120.3px;height:40.47px;"><div class="inp" style="width:106.9px"><span class="st">排序</span></div></div><div class="c b ctr" style="left:275.8px;top:264.68px;width:36.2px;height:40.47px;"><span class="cb on"><svg width="13" height="13" viewBox="0 0 13 13"><path d="M2.9 6.6 L5.3 9 L10.2 4.1" fill="none" stroke="#fff" stroke-width="1.5" stroke-linecap="round" stroke-linejoin="round"/></svg></span></div><div class="c b ctr" style="left:312.0px;top:264.68px;width:35.9px;height:40.47px;"><span class="cb on"><svg width="13" height="13" viewBox="0 0 13 13"><path d="M2.9 6.6 L5.3 9 L10.2 4.1" fill="none" stroke="#fff" stroke-width="1.5" stroke-linecap="round" stroke-linejoin="round"/></svg></span></div><div class="c b ctr" style="left:347.9px;top:264.68px;width:36.6px;height:40.47px;"><span class="cb"></span></div><div class="c b" style="left:384.5px;top:264.68px;width:120.3px;height:40.47px;"><div class="sel" style="width:107.1px"><span class="st">数字输入</span><svg class="chev" width="9" height="5" viewBox="0 0 9 5"><path d="M0.5 0.5 L4.5 4.3 L8.5 0.5" fill="none" stroke="#c2c2c2" stroke-width="0.9"/></svg></div></div><div class="c b" style="left:504.8px;top:264.68px;width:120.1px;height:40.47px;"><div class="sel" style="width:106.9px"><span class="st"></span><svg class="chev" width="9" height="5" viewBox="0 0 9 5"><path d="M0.5 0.5 L4.5 4.3 L8.5 0.5" fill="none" stroke="#c2c2c2" stroke-width="0.9"/></svg></div></div><div class="c b" style="left:624.9px;top:264.68px;width:120.1px;height:40.47px;"><div class="sel" style="width:106.9px"><span class="st">不验证</span><svg class="chev" width="9" height="5" viewBox="0 0 9 5"><path d="M0.5 0.5 L4.5 4.3 L8.5 0.5" fill="none" stroke="#c2c2c2" stroke-width="0.9"/></svg></div></div><div class="c b" style="left:745.0px;top:264.68px;width:144.5px;height:40.47px;"><div class="sel" style="width:131.3px"><span class="st">占一列位置</span><svg class="chev" width="9" height="5" viewBox="0 0 9 5"><path d="M0.5 0.5 L4.5 4.3 L8.5 0.5" fill="none" stroke="#c2c2c2" stroke-width="0.9"/></svg></div></div><div class="c b ctr" style="left:889.5px;top:264.68px;width:36.3px;height:40.47px;"><span class="cb"></span></div><div class="c b ctr" style="left:925.8px;top:264.68px;width:36.0px;height:40.47px;"><span class="cb on"><svg width="13" height="13" viewBox="0 0 13 13"><path d="M2.9 6.6 L5.3 9 L10.2 4.1" fill="none" stroke="#fff" stroke-width="1.5" stroke-linecap="round" stroke-linejoin="round"/></svg></span></div><div class="c b ctr" style="left:961.8px;top:264.68px;width:36.5px;height:40.47px;"><span class="cb"></span></div><div class="c b" style="left:998.3px;top:264.68px;width:107.8px;height:40.47px;"><div class="sel" style="width:94.6px"><span class="st lt">=</span><svg class="chev" width="9" height="5" viewBox="0 0 9 5"><path d="M0.5 0.5 L4.5 4.3 L8.5 0.5" fill="none" stroke="#c2c2c2" stroke-width="0.9"/></svg></div></div><div class="c b" style="left:1106.1px;top:264.68px;width:96.4px;height:40.47px;"><div class="sel" style="width:83.2px"><span class="st">居左</span><svg class="chev" width="9" height="5" viewBox="0 0 9 5"><path d="M0.5 0.5 L4.5 4.3 L8.5 0.5" fill="none" stroke="#c2c2c2" stroke-width="0.9"/></svg></div></div><div class="c b nb" style="left:1202.5px;top:264.68px;width:60.5px;height:40.47px;"><div class="inp" style="width:47.3px"><span class="st"></span></div></div><div class="c b" style="left:-0.5px;top:305.15px;width:35.5px;height:40.47px;"><span class="bt lt2">6</span></div><div class="c b" style="left:35.0px;top:305.15px;width:120.5px;height:40.47px;"><span class="bt lt2">status</span></div><div class="c b" style="left:155.5px;top:305.15px;width:120.3px;height:40.47px;"><div class="inp" style="width:106.9px"><span class="st">状态</span></div></div><div class="c b ctr" style="left:275.8px;top:305.15px;width:36.2px;height:40.47px;"><span class="cb on"><svg width="13" height="13" viewBox="0 0 13 13"><path d="M2.9 6.6 L5.3 9 L10.2 4.1" fill="none" stroke="#fff" stroke-width="1.5" stroke-linecap="round" stroke-linejoin="round"/></svg></span></div><div class="c b ctr" style="left:312.0px;top:305.15px;width:35.9px;height:40.47px;"><span class="cb"></span></div><div class="c b ctr" style="left:347.9px;top:305.15px;width:36.6px;height:40.47px;"><span class="cb"></span></div><div class="c b" style="left:384.5px;top:305.15px;width:120.3px;height:40.47px;"><div class="sel" style="width:107.1px"><span class="st">单选下拉框</span><svg class="chev" width="9" height="5" viewBox="0 0 9 5"><path d="M0.5 0.5 L4.5 4.3 L8.5 0.5" fill="none" stroke="#c2c2c2" stroke-width="0.9"/></svg></div></div><div class="c b" style="left:504.8px;top:305.15px;width:120.1px;height:40.47px;"><div class="sel" style="width:106.9px"><span class="st">系统状态</span><svg class="chev" width="9" height="5" viewBox="0 0 9 5"><path d="M0.5 0.5 L4.5 4.3 L8.5 0.5" fill="none" stroke="#c2c2c2" stroke-width="0.9"/></svg></div></div><div class="c b" style="left:624.9px;top:305.15px;width:120.1px;height:40.47px;"><div class="sel" style="width:106.9px"><span class="st">不验证</span><svg class="chev" width="9" height="5" viewBox="0 0 9 5"><path d="M0.5 0.5 L4.5 4.3 L8.5 0.5" fill="none" stroke="#c2c2c2" stroke-width="0.9"/></svg></div></div><div class="c b" style="left:745.0px;top:305.15px;width:144.5px;height:40.47px;"><div class="sel" style="width:131.3px"><span class="st">占一列位置</span><svg class="chev" width="9" height="5" viewBox="0 0 9 5"><path d="M0.5 0.5 L4.5 4.3 L8.5 0.5" fill="none" stroke="#c2c2c2" stroke-width="0.9"/></svg></div></div><div class="c b ctr" style="left:889.5px;top:305.15px;width:36.3px;height:40.47px;"><span class="cb on"><svg width="13" height="13" viewBox="0 0 13 13"><path d="M2.9 6.6 L5.3 9 L10.2 4.1" fill="none" stroke="#fff" stroke-width="1.5" stroke-linecap="round" stroke-linejoin="round"/></svg></span></div><div class="c b ctr" style="left:925.8px;top:305.15px;width:36.0px;height:40.47px;"><span class="cb on"><svg width="13" height="13" viewBox="0 0 13 13"><path d="M2.9 6.6 L5.3 9 L10.2 4.1" fill="none" stroke="#fff" stroke-width="1.5" stroke-linecap="round" stroke-linejoin="round"/></svg></span></div><div class="c b ctr" style="left:961.8px;top:305.15px;width:36.5px;height:40.47px;"><span class="cb on"><svg width="13" height="13" viewBox="0 0 13 13"><path d="M2.9 6.6 L5.3 9 L10.2 4.1" fill="none" stroke="#fff" stroke-width="1.5" stroke-linecap="round" stroke-linejoin="round"/></svg></span></div><div class="c b" style="left:998.3px;top:305.15px;width:107.8px;height:40.47px;"><div class="sel" style="width:94.6px"><span class="st lt">=</span><svg class="chev" width="9" height="5" viewBox="0 0 9 5"><path d="M0.5 0.5 L4.5 4.3 L8.5 0.5" fill="none" stroke="#c2c2c2" stroke-width="0.9"/></svg></div></div><div class="c b" style="left:1106.1px;top:305.15px;width:96.4px;height:40.47px;"><div class="sel" style="width:83.2px"><span class="st">居左</span><svg class="chev" width="9" height="5" viewBox="0 0 9 5"><path d="M0.5 0.5 L4.5 4.3 L8.5 0.5" fill="none" stroke="#c2c2c2" stroke-width="0.9"/></svg></div></div><div class="c b nb" style="left:1202.5px;top:305.15px;width:60.5px;height:40.47px;"><div class="inp" style="width:47.3px"><span class="st"></span></div></div><div class="c b" style="left:-0.5px;top:345.62px;width:35.5px;height:40.47px;"><span class="bt lt2">7</span></div><div class="c b" style="left:35.0px;top:345.62px;width:120.5px;height:40.47px;"><span class="bt lt2">remark</span></div><div class="c b" style="left:155.5px;top:345.62px;width:120.3px;height:40.47px;"><div class="inp" style="width:106.9px"><span class="st">备注</span></div></div><div class="c b ctr" style="left:275.8px;top:345.62px;width:36.2px;height:40.47px;"><span class="cb on"><svg width="13" height="13" viewBox="0 0 13 13"><path d="M2.9 6.6 L5.3 9 L10.2 4.1" fill="none" stroke="#fff" stroke-width="1.5" stroke-linecap="round" stroke-linejoin="round"/></svg></span></div><div class="c b ctr" style="left:312.0px;top:345.62px;width:35.9px;height:40.47px;"><span class="cb"></span></div><div class="c b ctr" style="left:347.9px;top:345.62px;width:36.6px;height:40.47px;"><span class="cb"></span></div><div class="c b" style="left:384.5px;top:345.62px;width:120.3px;height:40.47px;"><div class="sel" style="width:107.1px"><span class="st">文本域</span><svg class="chev" width="9" height="5" viewBox="0 0 9 5"><path d="M0.5 0.5 L4.5 4.3 L8.5 0.5" fill="none" stroke="#c2c2c2" stroke-width="0.9"/></svg></div></div><div class="c b" style="left:504.8px;top:345.62px;width:120.1px;height:40.47px;"><div class="sel" style="width:106.9px"><span class="st"></span><svg class="chev" width="9" height="5" viewBox="0 0 9 5"><path d="M0.5 0.5 L4.5 4.3 L8.5 0.5" fill="none" stroke="#c2c2c2" stroke-width="0.9"/></svg></div></div><div class="c b" style="left:624.9px;top:345.62px;width:120.1px;height:40.47px;"><div class="sel" style="width:106.9px"><span class="st">不验证</span><svg class="chev" width="9" height="5" viewBox="0 0 9 5"><path d="M0.5 0.5 L4.5 4.3 L8.5 0.5" fill="none" stroke="#c2c2c2" stroke-width="0.9"/></svg></div></div><div class="c b" style="left:745.0px;top:345.62px;width:144.5px;height:40.47px;"><div class="sel" style="width:131.3px"><span class="st">占两列位置</span><svg class="chev" width="9" height="5" viewBox="0 0 9 5"><path d="M0.5 0.5 L4.5 4.3 L8.5 0.5" fill="none" stroke="#c2c2c2" stroke-width="0.9"/></svg></div></div><div class="c b ctr" style="left:889.5px;top:345.62px;width:36.3px;height:40.47px;"><span class="cb"></span></div><div class="c b ctr" style="left:925.8px;top:345.62px;width:36.0px;height:40.47px;"><span class="cb on"><svg width="13" height="13" viewBox="0 0 13 13"><path d="M2.9 6.6 L5.3 9 L10.2 4.1" fill="none" stroke="#fff" stroke-width="1.5" stroke-linecap="round" stroke-linejoin="round"/></svg></span></div><div class="c b ctr" style="left:961.8px;top:345.62px;width:36.5px;height:40.47px;"><span class="cb"></span></div><div class="c b" style="left:998.3px;top:345.62px;width:107.8px;height:40.47px;"><div class="sel" style="width:94.6px"><span class="st lt">LIKE</span><svg class="chev" width="9" height="5" viewBox="0 0 9 5"><path d="M0.5 0.5 L4.5 4.3 L8.5 0.5" fill="none" stroke="#c2c2c2" stroke-width="0.9"/></svg></div></div><div class="c b" style="left:1106.1px;top:345.62px;width:96.4px;height:40.47px;"><div class="sel" style="width:83.2px"><span class="st">居左</span><svg class="chev" width="9" height="5" viewBox="0 0 9 5"><path d="M0.5 0.5 L4.5 4.3 L8.5 0.5" fill="none" stroke="#c2c2c2" stroke-width="0.9"/></svg></div></div><div class="c b nb" style="left:1202.5px;top:345.62px;width:60.5px;height:40.47px;"><div class="inp" style="width:47.3px"><span class="st"></span></div></div><div class="c b" style="left:-0.5px;top:386.09px;width:35.5px;height:40.47px;"><span class="bt lt2">8</span></div><div class="c b" style="left:35.0px;top:386.09px;width:120.5px;height:40.47px;"><span class="bt lt2">created_at</span></div><div class="c b" style="left:155.5px;top:386.09px;width:120.3px;height:40.47px;"><div class="inp" style="width:106.9px"><span class="st">创建时间</span></div></div><div class="c b ctr" style="left:275.8px;top:386.09px;width:36.2px;height:40.47px;"><span class="cb dis"></span></div><div class="c b ctr" style="left:312.0px;top:386.09px;width:35.9px;height:40.47px;"><span class="cb"></span></div><div class="c b ctr" style="left:347.9px;top:386.09px;width:36.6px;height:40.47px;"><span class="cb"></span></div><div class="c b" style="left:384.5px;top:386.09px;width:120.3px;height:40.47px;"><div class="sel" style="width:107.1px"><span class="st">时间范围选择</span><svg class="chev" width="9" height="5" viewBox="0 0 9 5"><path d="M0.5 0.5 L4.5 4.3 L8.5 0.5" fill="none" stroke="#c2c2c2" stroke-width="0.9"/></svg></div></div><div class="c b" style="left:504.8px;top:386.09px;width:120.1px;height:40.47px;"><div class="sel" style="width:106.9px"><span class="st"></span><svg class="chev" width="9" height="5" viewBox="0 0 9 5"><path d="M0.5 0.5 L4.5 4.3 L8.5 0.5" fill="none" stroke="#c2c2c2" stroke-width="0.9"/></svg></div></div><div class="c b" style="left:624.9px;top:386.09px;width:120.1px;height:40.47px;"><div class="sel" style="width:106.9px"><span class="st">不验证</span><svg class="chev" width="9" height="5" viewBox="0 0 9 5"><path d="M0.5 0.5 L4.5 4.3 L8.5 0.5" fill="none" stroke="#c2c2c2" stroke-width="0.9"/></svg></div></div><div class="c b" style="left:745.0px;top:386.09px;width:144.5px;height:40.47px;"><div class="sel" style="width:131.3px"><span class="st">占一列位置</span><svg class="chev" width="9" height="5" viewBox="0 0 9 5"><path d="M0.5 0.5 L4.5 4.3 L8.5 0.5" fill="none" stroke="#c2c2c2" stroke-width="0.9"/></svg></div></div><div class="c b ctr" style="left:889.5px;top:386.09px;width:36.3px;height:40.47px;"><span class="cb on"><svg width="13" height="13" viewBox="0 0 13 13"><path d="M2.9 6.6 L5.3 9 L10.2 4.1" fill="none" stroke="#fff" stroke-width="1.5" stroke-linecap="round" stroke-linejoin="round"/></svg></span></div><div class="c b ctr" style="left:925.8px;top:386.09px;width:36.0px;height:40.47px;"><span class="cb on"><svg width="13" height="13" viewBox="0 0 13 13"><path d="M2.9 6.6 L5.3 9 L10.2 4.1" fill="none" stroke="#fff" stroke-width="1.5" stroke-linecap="round" stroke-linejoin="round"/></svg></span></div><div class="c b ctr" style="left:961.8px;top:386.09px;width:36.5px;height:40.47px;"><span class="cb on"><svg width="13" height="13" viewBox="0 0 13 13"><path d="M2.9 6.6 L5.3 9 L10.2 4.1" fill="none" stroke="#fff" stroke-width="1.5" stroke-linecap="round" stroke-linejoin="round"/></svg></span></div><div class="c b" style="left:998.3px;top:386.09px;width:107.8px;height:40.47px;"><div class="sel" style="width:94.6px"><span class="st lt">BETWEEN</span><svg class="chev" width="9" height="5" viewBox="0 0 9 5"><path d="M0.5 0.5 L4.5 4.3 L8.5 0.5" fill="none" stroke="#c2c2c2" stroke-width="0.9"/></svg></div></div><div class="c b" style="left:1106.1px;top:386.09px;width:96.4px;height:40.47px;"><div class="sel" style="width:83.2px"><span class="st">居左</span><svg class="chev" width="9" height="5" viewBox="0 0 9 5"><path d="M0.5 0.5 L4.5 4.3 L8.5 0.5" fill="none" stroke="#c2c2c2" stroke-width="0.9"/></svg></div></div><div class="c b nb" style="left:1202.5px;top:386.09px;width:60.5px;height:40.47px;"><div class="inp" style="width:47.3px"><span class="st lt">180</span></div></div><div class="c b" style="left:-0.5px;top:426.56px;width:35.5px;height:40.47px;"><span class="bt lt2">9</span></div><div class="c b" style="left:35.0px;top:426.56px;width:120.5px;height:40.47px;"><span class="bt lt2">updated_at</span></div><div class="c b" style="left:155.5px;top:426.56px;width:120.3px;height:40.47px;"><div class="inp" style="width:106.9px"><span class="st">修改时间</span></div></div><div class="c b ctr" style="left:275.8px;top:426.56px;width:36.2px;height:40.47px;"><span class="cb dis"></span></div><div class="c b ctr" style="left:312.0px;top:426.56px;width:35.9px;height:40.47px;"><span class="cb"></span></div><div class="c b ctr" style="left:347.9px;top:426.56px;width:36.6px;height:40.47px;"><span class="cb"></span></div><div class="c b" style="left:384.5px;top:426.56px;width:120.3px;height:40.47px;"><div class="sel" style="width:107.1px"><span class="st">时间选择(Y-...</span><svg class="chev" width="9" height="5" viewBox="0 0 9 5"><path d="M0.5 0.5 L4.5 4.3 L8.5 0.5" fill="none" stroke="#c2c2c2" stroke-width="0.9"/></svg></div></div><div class="c b" style="left:504.8px;top:426.56px;width:120.1px;height:40.47px;"><div class="sel" style="width:106.9px"><span class="st"></span><svg class="chev" width="9" height="5" viewBox="0 0 9 5"><path d="M0.5 0.5 L4.5 4.3 L8.5 0.5" fill="none" stroke="#c2c2c2" stroke-width="0.9"/></svg></div></div><div class="c b" style="left:624.9px;top:426.56px;width:120.1px;height:40.47px;"><div class="sel" style="width:106.9px"><span class="st">不验证</span><svg class="chev" width="9" height="5" viewBox="0 0 9 5"><path d="M0.5 0.5 L4.5 4.3 L8.5 0.5" fill="none" stroke="#c2c2c2" stroke-width="0.9"/></svg></div></div><div class="c b" style="left:745.0px;top:426.56px;width:144.5px;height:40.47px;"><div class="sel" style="width:131.3px"><span class="st">占一列位置</span><svg class="chev" width="9" height="5" viewBox="0 0 9 5"><path d="M0.5 0.5 L4.5 4.3 L8.5 0.5" fill="none" stroke="#c2c2c2" stroke-width="0.9"/></svg></div></div><div class="c b ctr" style="left:889.5px;top:426.56px;width:36.3px;height:40.47px;"><span class="cb"></span></div><div class="c b ctr" style="left:925.8px;top:426.56px;width:36.0px;height:40.47px;"><span class="cb"></span></div><div class="c b ctr" style="left:961.8px;top:426.56px;width:36.5px;height:40.47px;"><span class="cb"></span></div><div class="c b" style="left:998.3px;top:426.56px;width:107.8px;height:40.47px;"><div class="sel" style="width:94.6px"><span class="st lt">=</span><svg class="chev" width="9" height="5" viewBox="0 0 9 5"><path d="M0.5 0.5 L4.5 4.3 L8.5 0.5" fill="none" stroke="#c2c2c2" stroke-width="0.9"/></svg></div></div><div class="c b" style="left:1106.1px;top:426.56px;width:96.4px;height:40.47px;"><div class="sel" style="width:83.2px"><span class="st">居左</span><svg class="chev" width="9" height="5" viewBox="0 0 9 5"><path d="M0.5 0.5 L4.5 4.3 L8.5 0.5" fill="none" stroke="#c2c2c2" stroke-width="0.9"/></svg></div></div><div class="c b nb" style="left:1202.5px;top:426.56px;width:60.5px;height:40.47px;"><div class="inp" style="width:47.3px"><span class="st"></span></div></div><div class="c b last" style="left:-0.5px;top:467.03px;width:35.5px;height:40.47px;"><span class="bt lt2">10</span></div><div class="c b last" style="left:35.0px;top:467.03px;width:120.5px;height:40.47px;"><span class="bt lt2">deleted_at</span></div><div class="c b last" style="left:155.5px;top:467.03px;width:120.3px;height:40.47px;"><div class="inp" style="width:106.9px"><span class="st">删除时间</span></div></div><div class="c b ctr last" style="left:275.8px;top:467.03px;width:36.2px;height:40.47px;"><span class="cb dis"></span></div><div class="c b ctr last" style="left:312.0px;top:467.03px;width:35.9px;height:40.47px;"><span class="cb"></span></div><div class="c b ctr last" style="left:347.9px;top:467.03px;width:36.6px;height:40.47px;"><span class="cb"></span></div><div class="c b last" style="left:384.5px;top:467.03px;width:120.3px;height:40.47px;"><div class="sel" style="width:107.1px"><span class="st">时间选择(Y-...</span><svg class="chev" width="9" height="5" viewBox="0 0 9 5"><path d="M0.5 0.5 L4.5 4.3 L8.5 0.5" fill="none" stroke="#c2c2c2" stroke-width="0.9"/></svg></div></div><div class="c b last" style="left:504.8px;top:467.03px;width:120.1px;height:40.47px;"><div class="sel" style="width:106.9px"><span class="st"></span><svg class="chev" width="9" height="5" viewBox="0 0 9 5"><path d="M0.5 0.5 L4.5 4.3 L8.5 0.5" fill="none" stroke="#c2c2c2" stroke-width="0.9"/></svg></div></div><div class="c b last" style="left:624.9px;top:467.03px;width:120.1px;height:40.47px;"><div class="sel" style="width:106.9px"><span class="st">不验证</span><svg class="chev" width="9" height="5" viewBox="0 0 9 5"><path d="M0.5 0.5 L4.5 4.3 L8.5 0.5" fill="none" stroke="#c2c2c2" stroke-width="0.9"/></svg></div></div><div class="c b last" style="left:745.0px;top:467.03px;width:144.5px;height:40.47px;"><div class="sel" style="width:131.3px"><span class="st">占一列位置</span><svg class="chev" width="9" height="5" viewBox="0 0 9 5"><path d="M0.5 0.5 L4.5 4.3 L8.5 0.5" fill="none" stroke="#c2c2c2" stroke-width="0.9"/></svg></div></div><div class="c b ctr last" style="left:889.5px;top:467.03px;width:36.3px;height:40.47px;"><span class="cb"></span></div><div class="c b ctr last" style="left:925.8px;top:467.03px;width:36.0px;height:40.47px;"><span class="cb"></span></div><div class="c b ctr last" style="left:961.8px;top:467.03px;width:36.5px;height:40.47px;"><span class="cb"></span></div><div class="c b last" style="left:998.3px;top:467.03px;width:107.8px;height:40.47px;"><div class="sel" style="width:94.6px"><span class="st lt">=</span><svg class="chev" width="9" height="5" viewBox="0 0 9 5"><path d="M0.5 0.5 L4.5 4.3 L8.5 0.5" fill="none" stroke="#c2c2c2" stroke-width="0.9"/></svg></div></div><div class="c b last" style="left:1106.1px;top:467.03px;width:96.4px;height:40.47px;"><div class="sel" style="width:83.2px"><span class="st">居左</span><svg class="chev" width="9" height="5" viewBox="0 0 9 5"><path d="M0.5 0.5 L4.5 4.3 L8.5 0.5" fill="none" stroke="#c2c2c2" stroke-width="0.9"/></svg></div></div><div class="c b nb last" style="left:1202.5px;top:467.03px;width:60.5px;height:40.47px;"><div class="inp" style="width:47.3px"><span class="st"></span></div></div></div>
</div></body>
</html>
